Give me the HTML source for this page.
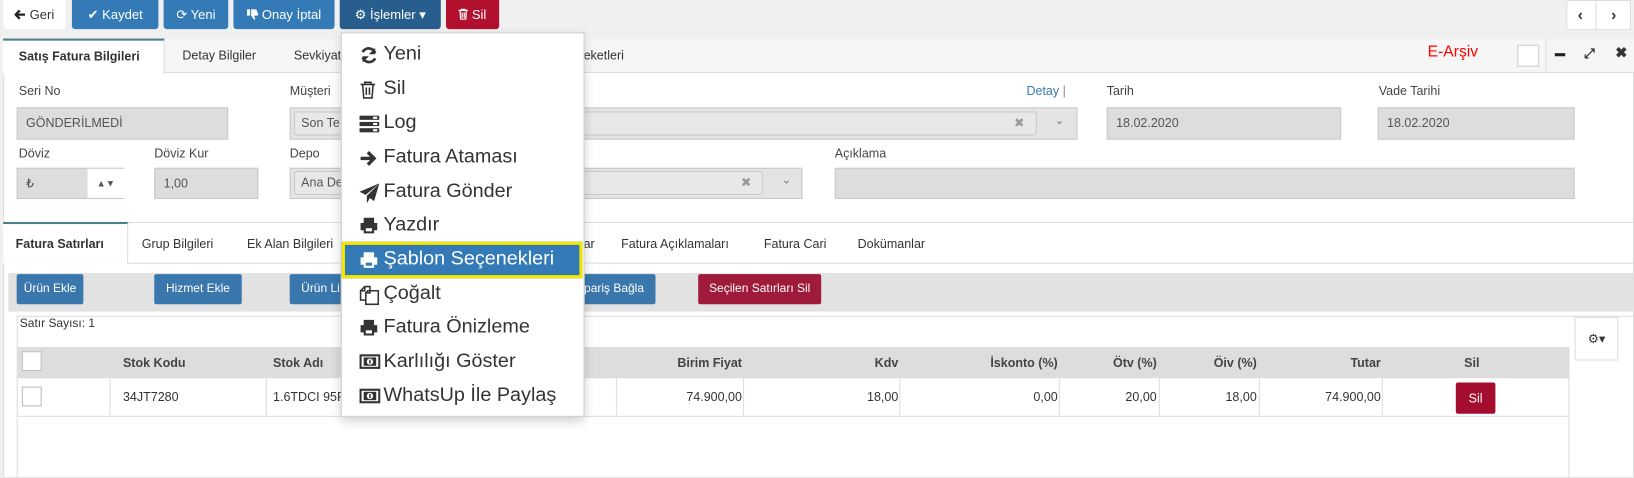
<!DOCTYPE html>
<html><head><meta charset="utf-8"><style>
*{box-sizing:border-box;margin:0;padding:0}
body{width:1634px;height:478px;overflow:hidden;background:#f0f0f0;font-family:"Liberation Sans",sans-serif;font-size:12px;color:#333;position:relative}
#w{position:absolute;left:0;top:0;width:1568px;height:459px;transform:scale(1.0421);transform-origin:0 0}
.a{position:absolute}
.btn{position:absolute;top:0;height:28px;color:#fff;font-size:12.5px;line-height:28px;text-align:center;border-radius:0 0 3px 3px}
.blue{background:#337ab7}
.lbl{position:absolute;font-size:12px;color:#444}
.inp{position:absolute;background:#ddd;border:1px solid #c8c8c8;font-size:12px;color:#555;padding-left:8px;line-height:28px}
.tab{position:absolute;font-size:12px;color:#333}
.tb{position:absolute;top:263px;height:29px;background:#3a77ad;color:#fff;font-size:11.5px;line-height:29px;text-align:center;border-radius:2px}
.th{position:absolute;top:333px;height:30px;line-height:30px;font-weight:bold;font-size:12px;color:#444}
.td{position:absolute;top:363px;height:37px;line-height:37px;font-size:12px;color:#333}
.vl{position:absolute;width:1px;background:#ddd}
.mi{position:absolute;left:345px;font-size:19px;color:#333;height:32px;line-height:32px}
.mi svg{position:absolute;left:0;top:8px}
.mi span{position:absolute;left:23px;white-space:nowrap}
</style></head><body><div id="w">
<!-- top buttons -->
<div class="btn" style="left:3px;width:60px;background:#fff;color:#333"><svg width="11" height="10" viewBox="0 0 11 10" style="vertical-align:-1px"><path d="M10 5H2M5 1L1 5l4 4" fill="none" stroke="#222" stroke-width="2.2"/></svg> Geri</div>
<div class="btn blue" style="left:69px;width:83px">✔ Kaydet</div>
<div class="btn blue" style="left:157px;width:62px">⟳ Yeni</div>
<div class="btn blue" style="left:224px;width:97px"><svg width="11" height="11" viewBox="0 0 11 11" style="vertical-align:-1px"><path d="M0 1h3v6H0zM4 1h5l2 5-1 1H7l1 4H7L4 7z" fill="#fff"/></svg> Onay İptal</div>
<div class="btn" style="left:326px;width:97px;background:#285e8e">⚙ İşlemler ▾</div>
<div class="btn" style="left:428px;width:51px;background:#b2102f"><svg width="9" height="11" viewBox="0 0 9 11" style="vertical-align:-1px"><path d="M0 2h9M3 2V1h3v1M1.5 2l.5 8.5h5L7.5 2M3.5 4v5M5.5 4v5" fill="none" stroke="#fff" stroke-width="1.2"/></svg> Sil</div>
<div class="a" style="left:1503px;top:0;width:62px;height:29px;background:#fff;border:1px solid #ddd;font-size:15px;font-weight:bold;line-height:27px"><span style="position:absolute;left:10px">‹</span><span style="position:absolute;left:27px;top:0;width:1px;height:27px;background:#ddd"></span><span style="position:absolute;left:42px">›</span></div>

<!-- panel 1 -->
<div class="a" style="left:3px;top:37px;width:1565px;height:422px;background:#fff;border:1px solid #ddd"></div>
<div class="a" style="left:3px;top:37px;width:1565px;height:33px;background:#f6f6f6;border-bottom:1px solid #ddd"></div>
<div class="a" style="left:3px;top:37px;width:155px;height:34px;background:#fff;border-top:2px solid #4a7f90;border-right:1px solid #ddd"></div>
<div class="tab" style="left:18px;top:47px;font-weight:bold">Satış Fatura Bilgileri</div>
<div class="tab" style="left:175px;top:46px">Detay Bilgiler</div>
<div class="tab" style="left:282px;top:46px">Sevkiyat</div>
<div class="tab" style="left:560px;top:46px">eketleri</div>
<div class="a" style="left:1370px;top:41px;color:#f00;font-size:15px">E-Arşiv</div>
<div class="a" style="left:1456px;top:43px;width:21px;height:21px;border:1px solid #ccc;background:#fff"></div>
<div class="a" style="left:1483px;top:37px;width:1px;height:33px;background:#ddd"></div>
<div class="a" style="left:1492px;top:51px;width:10px;height:3px;background:#222"></div>
<div class="a" style="left:1520px;top:43px;font-size:13px;font-weight:bold">⤢</div>
<div class="a" style="left:1550px;top:42px;font-size:14px;font-weight:bold">✖</div>

<div class="lbl" style="left:18px;top:80px">Seri No</div>
<div class="lbl" style="left:278px;top:80px">Müşteri</div>
<div class="lbl" style="left:985px;top:80px;color:#3a7ab5">Detay <span style="color:#888">|</span></div>
<div class="lbl" style="left:1062px;top:80px">Tarih</div>
<div class="lbl" style="left:1323px;top:80px">Vade Tarihi</div>
<div class="inp" style="left:16px;top:103px;width:203px;height:31px">GÖNDERİLMEDİ</div>
<div class="inp" style="left:278px;top:103px;width:756px;height:31px;background:#e4e4e4;padding:0"></div>
<div class="inp" style="left:282px;top:107px;width:713px;height:23px;line-height:21px;background:#e8e8e8;border-radius:3px;padding-left:6px">Son Te<span style="position:absolute;left:690px;color:#999">✖</span></div>
<div class="a" style="left:1012px;top:109px;color:#777;font-size:11px">⌄</div>
<div class="inp" style="left:1062px;top:103px;width:225px;height:31px">18.02.2020</div>
<div class="inp" style="left:1322px;top:103px;width:189px;height:31px">18.02.2020</div>

<div class="lbl" style="left:18px;top:140px">Döviz</div>
<div class="lbl" style="left:148px;top:140px">Döviz Kur</div>
<div class="lbl" style="left:278px;top:140px">Depo</div>
<div class="lbl" style="left:801px;top:140px">Açıklama</div>
<div class="inp" style="left:16px;top:161px;width:103px;height:30px">₺<span style="position:absolute;left:67px;top:0;width:35px;height:28px;background:#fff;text-align:center;font-size:9px;line-height:28px">▲▼</span></div>
<div class="inp" style="left:148px;top:161px;width:100px;height:30px">1,00</div>
<div class="inp" style="left:278px;top:161px;width:492px;height:30px;background:#e4e4e4;padding:0"></div>
<div class="inp" style="left:282px;top:164px;width:450px;height:23px;line-height:21px;background:#e8e8e8;border-radius:3px;padding-left:6px">Ana De<span style="position:absolute;left:428px;color:#999">✖</span></div>
<div class="a" style="left:750px;top:166px;color:#777;font-size:11px">⌄</div>
<div class="inp" style="left:801px;top:161px;width:710px;height:30px"></div>

<!-- tabs 2 -->
<div class="a" style="left:3px;top:213px;width:1565px;height:1px;background:#ddd"></div>
<div class="a" style="left:3px;top:252px;width:1565px;height:1px;background:#ddd"></div>
<div class="a" style="left:3px;top:213px;width:120px;height:40px;background:#fff;border-top:2px solid #4a7f90;border-right:1px solid #ddd"></div>
<div class="tab" style="left:15px;top:227px;font-weight:bold">Fatura Satırları</div>
<div class="tab" style="left:136px;top:227px">Grup Bilgileri</div>
<div class="tab" style="left:237px;top:227px">Ek Alan Bilgileri</div>
<div class="tab" style="left:560px;top:227px">ar</div>
<div class="tab" style="left:596px;top:227px">Fatura Açıklamaları</div>
<div class="tab" style="left:733px;top:227px">Fatura Cari</div>
<div class="tab" style="left:823px;top:227px">Dokümanlar</div>

<div class="a" style="left:8px;top:262px;width:1560px;height:37px;background:#e2e2e2"></div>
<div class="tb" style="left:16px;width:64px">Ürün Ekle</div>
<div class="tb" style="left:148px;width:84px">Hizmet Ekle</div>
<div class="tb" style="left:278px;width:80px;text-align:left;padding-left:11px">Ürün Li</div>
<div class="tb" style="left:540px;width:89px;text-align:right;padding-right:11px">pariş Bağla</div>
<div class="tb" style="left:670px;width:118px;background:#a01a3a">Seçilen Satırları Sil</div>

<div class="a" style="left:16px;top:303px;width:1552px;height:156px;border:1px solid #ddd;border-right:none;border-bottom:none"></div>
<div class="a" style="left:19px;top:305px;font-size:11.5px">Satır Sayısı: 1</div>
<div class="a" style="left:1511px;top:304px;width:42px;height:42px;border:1px solid #ddd;background:#fff;text-align:center;line-height:40px;font-size:12px">⚙▾</div>

<div class="a" style="left:17px;top:333px;width:1489px;height:30px;background:#ddd"></div>
<div class="a" style="left:17px;top:399px;width:1489px;height:1px;background:#ddd"></div>
<div class="a" style="left:1505px;top:333px;width:1px;height:126px;background:#ddd"></div>
<div class="a" style="left:21px;top:337px;width:19px;height:19px;background:#fff;border:1px solid #bbb"></div>
<div class="a" style="left:21px;top:371px;width:19px;height:19px;background:#fff;border:1px solid #bbb"></div>
<div class="vl" style="left:105px;top:333px;height:67px"></div>
<div class="vl" style="left:255px;top:333px;height:67px"></div>
<div class="vl" style="left:591px;top:333px;height:67px"></div>
<div class="vl" style="left:713px;top:333px;height:67px"></div>
<div class="vl" style="left:863px;top:333px;height:67px"></div>
<div class="vl" style="left:1016px;top:333px;height:67px"></div>
<div class="vl" style="left:1112px;top:333px;height:67px"></div>
<div class="vl" style="left:1208px;top:333px;height:67px"></div>
<div class="vl" style="left:1326px;top:333px;height:67px"></div>
<div class="th" style="left:118px">Stok Kodu</div>
<div class="th" style="left:262px">Stok Adı</div>
<div class="th" style="right:856px">Birim Fiyat</div>
<div class="th" style="right:706px">Kdv</div>
<div class="th" style="right:553px">İskonto (%)</div>
<div class="th" style="right:458px">Ötv (%)</div>
<div class="th" style="right:362px">Öiv (%)</div>
<div class="th" style="right:243px">Tutar</div>
<div class="th" style="left:1405px">Sil</div>
<div class="td" style="left:118px">34JT7280</div>
<div class="td" style="left:262px">1.6TDCI 95P</div>
<div class="td" style="right:856px">74.900,00</div>
<div class="td" style="right:706px">18,00</div>
<div class="td" style="right:553px">0,00</div>
<div class="td" style="right:458px">20,00</div>
<div class="td" style="right:362px">18,00</div>
<div class="td" style="right:243px">74.900,00</div>
<div class="a" style="left:1397px;top:367px;width:38px;height:30px;background:#a50d2e;color:#fff;line-height:30px;text-align:center;border-radius:2px">Sil</div>

<!-- dropdown -->
<div class="a" style="left:327px;top:31px;width:234px;height:369px;background:#fff;border:1px solid #ccc;box-shadow:0 4px 10px rgba(0,0,0,.2)"></div>
<div class="a" style="left:328px;top:232px;width:231px;height:35px;background:#337ab7;border:3px solid #f5e600"></div>
<div class="mi" style="top:36px"><svg width="18" height="18" viewBox="0 0 18 18"><path d="M15 7A6.5 6.5 0 0 0 3 6M3 11a6.5 6.5 0 0 0 12 1" fill="none" stroke="#333" stroke-width="2.6"/><path d="M15 2v6h-6zM3 16v-6h6z" fill="#333"/></svg><span>Yeni</span></div>
<div class="mi" style="top:69px"><svg width="16" height="18" viewBox="0 0 16 18"><path d="M1 4h14M5 4V2h6v2M3 4l1 13h8l1-13M6.5 7v7M9.5 7v7" fill="none" stroke="#333" stroke-width="1.5"/></svg><span>Sil</span></div>
<div class="mi" style="top:102px"><svg width="19" height="18" viewBox="0 0 19 18"><rect x="0" y="1" width="19" height="4" fill="#333"/><rect x="0" y="7" width="19" height="4" fill="#333"/><rect x="0" y="13" width="19" height="4" fill="#333"/><rect x="13" y="2" width="4" height="2" fill="#fff"/><rect x="13" y="8" width="4" height="2" fill="#fff"/><rect x="13" y="14" width="4" height="2" fill="#fff"/></svg><span>Log</span></div>
<div class="mi" style="top:135px"><svg width="18" height="18" viewBox="0 0 18 18"><path d="M1 9h13M8 3l6 6-6 6" fill="none" stroke="#333" stroke-width="3.2"/></svg><span>Fatura Ataması</span></div>
<div class="mi" style="top:168px"><svg width="19" height="19" viewBox="0 0 19 19"><path d="M19 0L0 8l6 3zM19 0L7 12v7l3-5 4 3z" fill="#333"/></svg><span>Fatura Gönder</span></div>
<div class="mi" style="top:200px"><svg width="18" height="17" viewBox="0 0 18 17"><path d="M4 1h10v5H4zM1 6h16v7h-3v3H4v-3H1z" fill="#333"/><rect x="6" y="11" width="6" height="3" fill="#fff"/></svg><span>Yazdır</span></div>
<div class="mi" style="top:233px;color:#fff"><svg width="18" height="17" viewBox="0 0 18 17"><path d="M4 1h10v5H4zM1 6h16v7h-3v3H4v-3H1z" fill="#fff"/><rect x="6" y="11" width="6" height="3" fill="#337ab7"/></svg><span>Şablon Seçenekleri</span></div>
<div class="mi" style="top:266px"><svg width="19" height="19" viewBox="0 0 19 19"><path d="M1 5l4-4h5v4M5 1v4H1v9h5M10 5H8L6 7v11h12V5zM6 7h4V5" fill="none" stroke="#333" stroke-width="1.5"/></svg><span>Çoğalt</span></div>
<div class="mi" style="top:298px"><svg width="18" height="17" viewBox="0 0 18 17"><path d="M4 1h10v5H4zM1 6h16v7h-3v3H4v-3H1z" fill="#333"/><rect x="6" y="11" width="6" height="3" fill="#fff"/></svg><span>Fatura Önizleme</span></div>
<div class="mi" style="top:331px"><svg width="20" height="16" viewBox="0 0 20 16"><rect x="1" y="2" width="18" height="12" fill="none" stroke="#333" stroke-width="2"/><rect x="4" y="4" width="12" height="8" fill="#333"/><circle cx="10" cy="8" r="3" fill="#fff"/><rect x="9.3" y="6" width="1.4" height="4" fill="#333"/></svg><span>Karlılığı Göster</span></div>
<div class="mi" style="top:364px"><svg width="20" height="16" viewBox="0 0 20 16"><rect x="1" y="2" width="18" height="12" fill="none" stroke="#333" stroke-width="2"/><rect x="4" y="4" width="12" height="8" fill="#333"/><circle cx="10" cy="8" r="3" fill="#fff"/><rect x="9.3" y="6" width="1.4" height="4" fill="#333"/></svg><span>WhatsUp İle Paylaş</span></div>
</div></body></html>
